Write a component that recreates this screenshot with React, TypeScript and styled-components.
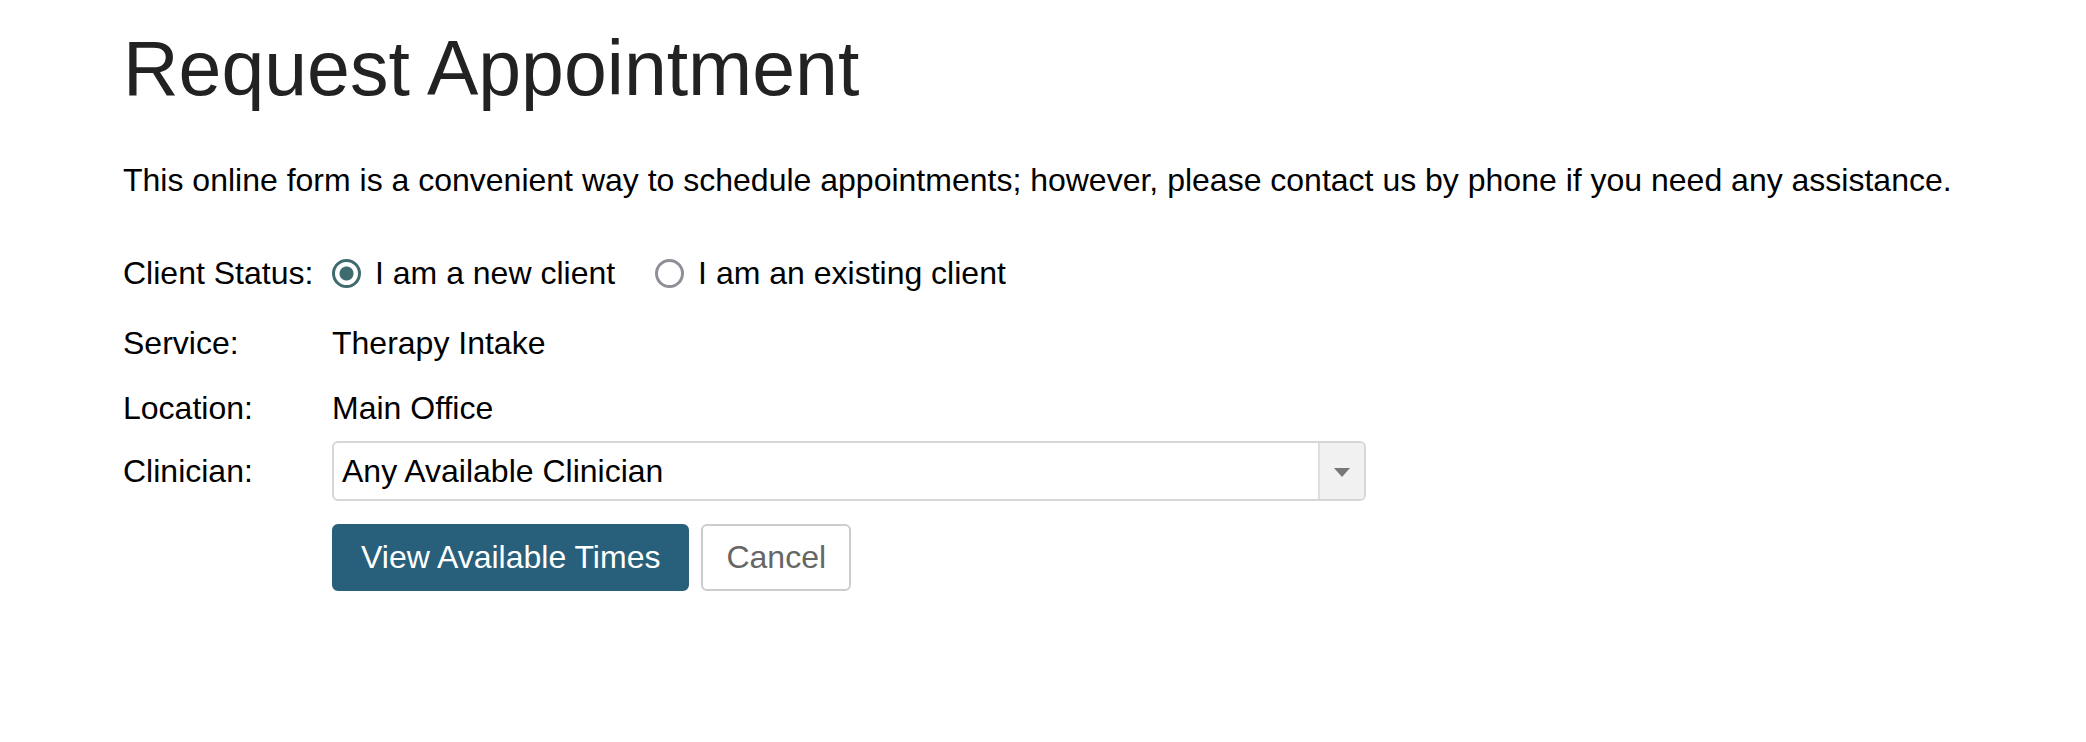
import React from "react";
import styled, { createGlobalStyle } from "styled-components";

const GlobalStyle = createGlobalStyle`
  body {
    margin: 0;
    background: #ffffff;
    font-family: "Liberation Sans", Arial, Helvetica, sans-serif;
    color: #000;
  }
`;

const Page = styled.main`
  padding: 30px 0 0 123px;
`;

const Title = styled.h1`
  margin: 0;
  font-size: 77px;
  line-height: 76px;
  font-weight: 400;
  color: #222;
`;

const Intro = styled.p`
  margin: 54px 0 0;
  font-size: 32px;
  line-height: 40px;
`;

const Form = styled.form`
  margin-top: 49px;
  display: flex;
  flex-direction: column;
`;

const FieldRow = styled.div<{ $h: number; $space?: number }>`
  display: grid;
  grid-template-columns: 209px auto;
  align-items: center;
  justify-items: start;
  height: ${(p) => p.$h}px;
  margin-top: ${(p) => p.$space ?? 0}px;
  font-size: 32px;
`;

const RadioGroup = styled.div`
  display: flex;
  align-items: center;
  gap: 40px;
`;

const RadioOption = styled.label`
  display: flex;
  align-items: center;
  gap: 14px;
  cursor: pointer;
`;

const Radio = styled.input.attrs({ type: "radio" })`
  appearance: none;
  margin: 0;
  width: 29px;
  height: 29px;
  border-radius: 50%;
  border: 3.5px solid #8f8f97;
  background: #fff;
  box-sizing: border-box;
  &:checked {
    border-color: #3f6b6f;
    background: radial-gradient(circle, #3f6b6f 0 6.5px, #fff 7.5px);
  }
`;

const SelectBox = styled.div`
  width: 1034px;
  height: 60px;
  box-sizing: border-box;
  display: flex;
  align-items: stretch;
  border: 2px solid #d6d6d6;
  border-radius: 6px;
  background: #fff;
  overflow: hidden;
`;

const SelectText = styled.div`
  flex: 1;
  display: flex;
  align-items: center;
  padding-left: 8px;
`;

const SelectArrow = styled.div`
  width: 44px;
  display: flex;
  align-items: center;
  justify-content: center;
  background: #f0f1f0;
  border-left: 2px solid #dedede;
  &::after {
    content: "";
    width: 0;
    height: 0;
    border-left: 8px solid transparent;
    border-right: 8px solid transparent;
    border-top: 9px solid #777;
    margin-top: 2px;
  }
`;

const Actions = styled.div`
  display: flex;
  gap: 12px;
`;

const Button = styled.button<{ $primary?: boolean }>`
  height: 67px;
  box-sizing: border-box;
  padding: 0 ${(p) => (p.$primary ? 27 : 23)}px;
  font-family: "Liberation Sans", Arial, Helvetica, sans-serif;
  font-size: 32px;
  border-radius: 6px;
  border: 2px solid ${(p) => (p.$primary ? "#285f7b" : "#cccccc")};
  background: ${(p) => (p.$primary ? "#285f7b" : "#ffffff")};
  color: ${(p) => (p.$primary ? "#ffffff" : "#666666")};
  cursor: pointer;
`;

export default function App() {
  return (
    <>
      <GlobalStyle />
      <Page>
        <Title>Request Appointment</Title>
        <Intro>
          This online form is a convenient way to schedule appointments; however, please contact us by
          phone if you need any assistance.
        </Intro>
        <Form onSubmit={(e) => e.preventDefault()}>
          <FieldRow $h={48}>
            <span>Client Status:</span>
            <RadioGroup>
              <RadioOption>
                <Radio name="status" defaultChecked />
                I am a new client
              </RadioOption>
              <RadioOption>
                <Radio name="status" />
                I am an existing client
              </RadioOption>
            </RadioGroup>
          </FieldRow>

          <FieldRow $h={48} $space={22}>
            <span>Service:</span>
            <span>Therapy Intake</span>
          </FieldRow>

          <FieldRow $h={48} $space={17}>
            <span>Location:</span>
            <span>Main Office</span>
          </FieldRow>

          <FieldRow $h={60} $space={9}>
            <span>Clinician:</span>
            <SelectBox>
              <SelectText>Any Available Clinician</SelectText>
              <SelectArrow />
            </SelectBox>
          </FieldRow>

          <FieldRow $h={67} $space={23}>
            <span />
            <Actions>
              <Button type="submit" $primary>
                View Available Times
              </Button>
              <Button type="button">Cancel</Button>
            </Actions>
          </FieldRow>
        </Form>
      </Page>
    </>
  );
}
